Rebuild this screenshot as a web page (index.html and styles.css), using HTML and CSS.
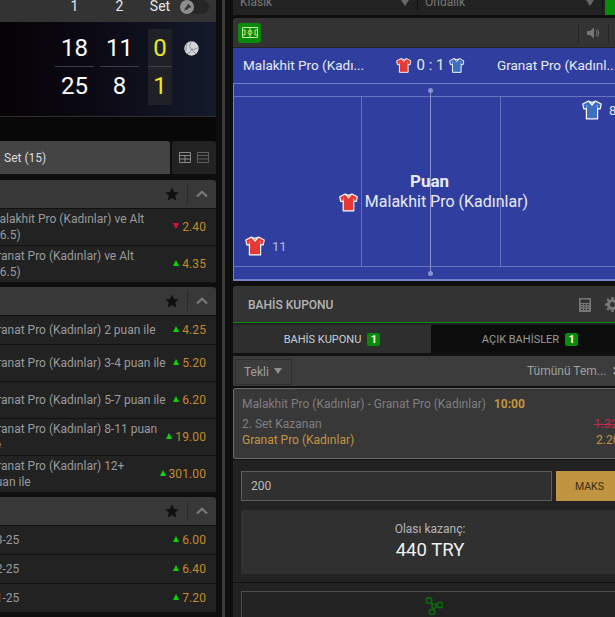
FILE: index.html
```html
<!DOCTYPE html>
<html lang="tr">
<head>
<meta charset="utf-8">
<title>Canlı Bahis</title>
<link rel="stylesheet" href="styles.css">
</head>
<body>
<svg class="defs" width="0" height="0">
  <symbol id="jersey" viewBox="0 0 20 20">
    <path d="M6.5 1 L9 2.2 H11 L13.500 1 L19.200 4 L18.200 9 L15.600 8.600 V18.800 H4.400 V8.600 L1.800 9 L0.800 4 Z" fill="currentColor" stroke="#fff" stroke-width="1.200" stroke-linejoin="round"/>
    <path d="M7 1.500 L10 5 L13 1.500" fill="none" stroke="#fff" stroke-width="1.200"/>
    <path d="M4.400 8.600 L5 5 M15.600 8.600 L15 5" fill="none" stroke="#fff" stroke-width=".6" opacity=".7"/>
  </symbol>
  <symbol id="star" viewBox="0 0 14 14">
    <path d="M7 .5 L9 5 L13.800 5.400 L10.200 8.600 L11.300 13.400 L7 10.900 L2.700 13.400 L3.800 8.600 L.2 5.400 L5 5 Z" fill="#0f0f0f"/>
  </symbol>
  <symbol id="chev" viewBox="0 0 12 8">
    <path d="M1 6.500 L6 1.800 L11 6.500" fill="none" stroke="#7a7a7a" stroke-width="2.200"/>
  </symbol>
</svg>
<div class="page">
  <section class="left">
    <div class="score-head">
      <span class="sh-col">1</span><span class="sh-col">2</span><span class="sh-col sh-set">Set</span>
      <span class="toggle"><span class="knob"><svg width="9" height="9" viewBox="0 0 9 9"><path d="M5 1 L8 4 L6 4.500 L3.500 7 L2 5.500 L4.500 3 Z M3 6 L1 8" fill="#333" stroke="#333" stroke-width=".7"/></svg></span></span>
    </div>
    <div class="score-board">
      <div class="score-col"><span class="num top">18</span><span class="num">25</span></div>
      <div class="score-col"><span class="num top">11</span><span class="num">8</span></div>
      <div class="score-col set"><span class="num top">0</span><span class="num">1</span></div>
      <svg class="ball" width="15" height="15" viewBox="0 0 15 15"><circle cx="7.500" cy="7.500" r="7.200" fill="#d4d5d8"/><path d="M7.500 .5 C5 4 5.500 7 7.500 8 C10 9 13 8 14.500 6 M7.500 8 C7 10.500 5 13 2.500 12.500 M7.500 8 C9 10.500 11 12.500 12.500 12.500 M3 2.500 C2 5 2 8 2 10" fill="none" stroke="#74777e" stroke-width=".7"/></svg>
    </div>
    <div class="strip"></div>
    <div class="tabs">
      <div class="tab-on">Set (15)</div>
      <div class="view-btns">
        <svg width="12" height="11" viewBox="0 0 12 11"><path d="M.5 .5 H11.500 V10.500 H.5 Z M.5 3.500 H11.500 M.5 7 H11.500 M6 3.500 V10.500" fill="none" stroke="#8a8a8a"/></svg>
        <svg width="12" height="11" viewBox="0 0 12 11"><path d="M.5 .5 H11.500 V10.500 H.5 Z M.5 3.500 H11.500 M.5 7 H11.500" fill="none" stroke="#5f5f5f"/></svg>
      </div>
    </div>

    <div class="market">
      <div class="m-head"><svg class="m-star" width="14" height="14"><use href="#star"/></svg><i class="m-sep"></i><svg class="m-chev" width="12" height="8"><use href="#chev"/></svg></div>
      <div class="row tall"><span class="label">Malakhit Pro (Kadınlar) ve Alt (46.5)</span><i class="tri down"></i><span class="odd">2.40</span></div>
      <div class="row tall"><span class="label">Granat Pro (Kadınlar) ve Alt (46.5)</span><i class="tri"></i><span class="odd">4.35</span></div>
    </div>

    <div class="market">
      <div class="m-head"><svg class="m-star" width="14" height="14"><use href="#star"/></svg><i class="m-sep"></i><svg class="m-chev" width="12" height="8"><use href="#chev"/></svg></div>
      <div class="row short"><span class="label">Granat Pro (Kadınlar) 2 puan ile</span><i class="tri"></i><span class="odd">4.25</span></div>
      <div class="row tall"><span class="label">Granat Pro (Kadınlar) 3-4 puan ile</span><i class="tri"></i><span class="odd">5.20</span></div>
      <div class="row tall"><span class="label">Granat Pro (Kadınlar) 5-7 puan ile</span><i class="tri"></i><span class="odd">6.20</span></div>
      <div class="row tall"><span class="label">Granat Pro (Kadınlar) 8-11 puan ile</span><i class="tri"></i><span class="odd">19.00</span></div>
      <div class="row tall"><span class="label narrow">Granat Pro (Kadınlar) 12+ puan ile</span><i class="tri"></i><span class="odd">301.00</span></div>
    </div>

    <div class="market">
      <div class="m-head"><svg class="m-star" width="14" height="14"><use href="#star"/></svg><i class="m-sep"></i><svg class="m-chev" width="12" height="8"><use href="#chev"/></svg></div>
      <div class="row short"><span class="label">23-25</span><i class="tri"></i><span class="odd">6.00</span></div>
      <div class="row short"><span class="label">22-25</span><i class="tri"></i><span class="odd">6.40</span></div>
      <div class="row short"><span class="label">21-25</span><i class="tri"></i><span class="odd">7.20</span></div>
    </div>
  </section>

  <div class="scroll"></div>

  <section class="right">
    <div class="selects">
      <div class="sel">Klasik<i class="caret"></i></div>
      <div class="sel">Ondalık<i class="caret"></i></div>
      <div class="sel-green"></div>
    </div>

    <div class="tool">
      <div class="pitch-btn"><svg width="16" height="11" viewBox="0 0 16 11"><path d="M.5 .5 H15.500 V10.500 H.5 Z M8 .5 V10.500 M.5 3 H3 V8 H.5 M15.500 3 H13 V8 H15.500" fill="none" stroke="#bfeea0"/><circle cx="8" cy="5.500" r="2" fill="none" stroke="#e8e060"/></svg></div>
      <div class="tool-right">
        <i class="tool-sep"></i>
        <svg width="13" height="12" viewBox="0 0 13 12"><path d="M0 4 H3 L7 .5 V11.500 L3 8 H0 Z" fill="#777"/><path d="M9 3.500 Q11 6 9 8.500 M10.500 2 Q13 6 10.500 10" fill="none" stroke="#777"/></svg>
        <i class="tool-sep"></i>
      </div>
    </div>

    <div class="match">
      <div class="teams">
        <span class="team">Malakhit Pro (Kadı...</span>
        <span class="mid">
          <svg class="j red" width="17" height="17"><use href="#jersey"/></svg>
          <span class="sc">0 : 1</span>
          <svg class="j blue" width="17" height="17"><use href="#jersey"/></svg>
        </span>
        <span class="team t2">Granat Pro (Kadınl...</span>
      </div>
      <div class="court">
        <i class="ln h1"></i><i class="ln h2"></i><i class="ln v1"></i><i class="ln v2"></i><i class="ln v3"></i>
        <i class="dot d1"></i><i class="dot d2"></i>
        <div class="p-top"><svg class="j blue" width="20" height="20"><use href="#jersey"/></svg><span>8</span></div>
        <div class="p-bot"><svg class="j red" width="20" height="20"><use href="#jersey"/></svg><span>11</span></div>
        <div class="center">
          <div class="puan">Puan</div>
          <div class="who"><svg class="j red" width="19" height="19"><use href="#jersey"/></svg>Malakhit Pro (Kadınlar)</div>
        </div>
      </div>
    </div>

    <div class="bs-head">
      <span>BAHİS KUPONU</span>
      <span class="bs-icons">
        <svg width="12" height="14" viewBox="0 0 12 14"><path d="M1 0 H11 A1 1 0 0 1 12 1 V13 A1 1 0 0 1 11 14 H1 A1 1 0 0 1 0 13 V1 A1 1 0 0 1 1 0 Z" fill="#777"/><path d="M2 2 H10 V4.500 H2 Z M2 6.500 H4 M5 6.500 H7 M8 6.500 H10 M2 9 H4 M5 9 H7 M8 9 H10 M2 11.500 H4 M5 11.500 H7 M8 11.500 H10" fill="#333" stroke="#333"/></svg>
        <svg width="15" height="15" viewBox="0 0 15 15"><circle cx="7.500" cy="7.500" r="4" fill="none" stroke="#777" stroke-width="3"/><path d="M7.500 0 V3 M7.500 12 V15 M0 7.500 H3 M12 7.500 H15 M2.200 2.200 L4.300 4.300 M10.700 10.700 L12.800 12.800 M12.800 2.200 L10.700 4.300 M4.300 10.700 L2.200 12.800" stroke="#777" stroke-width="2.400"/></svg>
      </span>
    </div>
    <div class="bs-tabs">
      <div class="bs-tab on">BAHİS KUPONU<b class="badge">1</b></div>
      <div class="bs-tab">AÇIK BAHİSLER<b class="badge">1</b></div>
    </div>
    <div class="bs-type">
      <div class="tekli">Tekli<i class="caret light"></i></div>
      <div class="clear">Tümünü Tem...<span class="x">✕</span></div>
    </div>
    <div class="slip">
      <div class="slip-top"><span class="match-name">Malakhit Pro (Kadınlar) - Granat Pro (Kadınlar)</span><b class="time">10:00</b><span class="x2">✕</span></div>
      <div class="slip-line grey"><span>2. Set Kazanan</span><s class="old">1.32</s></div>
      <div class="slip-line gold"><span>Granat Pro (Kadınlar)</span><span class="new">2.20</span></div>
    </div>
    <div class="stake">
      <div class="stake-row">
        <div class="amount">200</div>
        <div class="maks">MAKS</div>
      </div>
      <div class="win">
        <div class="win-l">Olası kazanç:</div>
        <div class="win-v">440 TRY</div>
      </div>
    </div>
    <div class="spin-wrap">
      <div class="spin"><svg width="18" height="18" viewBox="0 0 18 18"><g fill="none" stroke="#0a6e0a" stroke-width="1.500"><circle cx="9" cy="9" r="2.200"/><circle cx="4" cy="3.500" r="2.800"/><circle cx="15" cy="8" r="2.800"/><circle cx="7" cy="15" r="2.800"/><path d="M7.500 7.500 L5.500 5.500 M11 8.700 L12.500 8.300 M8.300 11 L7.800 12.500"/></g></svg></div>
    </div>
  </section>
</div>
</body>
</html>
```
FILE: styles.css
```css
* { box-sizing: border-box; }
html, body { margin: 0; height: 617px; overflow: hidden; background: #0e0e0e; }
body { font-family: Roboto, "Liberation Sans", sans-serif; color: #aaa; font-size: 12px; }
.defs { position: absolute; }
i { display: block; font-style: normal; }

.page { display: flex; width: 615px; height: 617px; overflow: hidden; }
.left { width: 216px; flex: none; }
.scroll { width: 3px; flex: none; margin-left: 6px; background: #3a3a3a; }
.right { width: 400px; flex: none; margin-left: 8px; }

/* score */
.score-head { height: 22px; background: #333; display: flex; align-items: flex-start; padding-left: 52px; color: #e6e6e6; font-size: 14px; line-height: 12px; }
.sh-col { width: 45px; text-align: center; }
.sh-set { width: 36px; }
.toggle { width: 29px; height: 14px; margin-left: 2px; border-radius: 7px; background: #262626; display: block; }
.knob { display: flex; align-items: center; justify-content: center; width: 14px; height: 14px; border-radius: 50%; background: #8e8e8e; }
.score-board { height: 95px; background: linear-gradient(90deg, #060206 0, #0c0a14 45%, #141a2c 100%); display: flex; padding: 7px 0 0 55px; border-bottom: 1px solid #2c2c2c; align-items: flex-start; }
.score-col { width: 39px; margin-right: 6px; display: flex; flex-direction: column; align-items: stretch; }
.num { height: 38px; display: flex; align-items: center; justify-content: center; font-size: 24px; color: #fff; }
.num.top { border-bottom: 1px solid #3c3c44; }
.score-col.set { width: 24px; background: #202126; margin-left: 3px; margin-right: 12px; height: 76px; }
.set .num { color: #e8e820; }
.ball { margin-top: 12px; }
.strip { height: 24px; background: #080808; }
.tabs { display: flex; height: 34px; }
.tab-on { width: 170px; height: 33px; background: #444; color: #ddd; font-size: 12px; padding: 0 0 0 4px; display: flex; align-items: center; border-radius: 0 3px 0 0; }
.view-btns { margin-left: 2px; flex: 1; background: #222; display: flex; align-items: center; gap: 6px; padding-left: 7px; border-radius: 3px 3px 0 0; height: 33px; }

/* markets */
.market { margin-top: 4px; }
.tabs + .market { margin-top: 5px; }
.m-head { height: 29px; background: #383838; border-bottom: 1px solid #111; display: flex; align-items: center; justify-content: flex-end; padding-right: 8px; border-radius: 0 3px 0 0; }
.m-star { margin-right: 8px; }
.m-sep { width: 1px; height: 20px; background: #2a2a2a; margin-right: 8px; }
.row { display: flex; align-items: center; background: #222; border-bottom: 1px solid #111; padding-right: 10px; }
.short { height: 29px; }
.tall { height: 37px; }
.label { flex: 1; margin-left: -11px; color: #9a9a9a; font-size: 12px; line-height: 16px; min-width: 0; padding-right: 7px; }
.label.narrow { padding-right: 14px; }
.tri { width: 0; height: 0; border: 3px solid transparent; border-bottom: 6px solid #0cd20c; border-top: 0; margin-right: 3px; margin-top: -3px; }
.tri.down { border-bottom: 0; border-top: 6px solid #d4103c; }
.odd { color: #c58a2b; font-size: 12px; letter-spacing: .1px; text-align: right; }

/* right top */
.selects { height: 15px; display: flex; background: #222; }
.sel { width: 185px; height: 15px; margin-top: -5px; line-height: 15px; padding-left: 7px; color: #777; font-size: 12px; display: flex; justify-content: space-between; border-right: 1px solid #111; padding-right: 8px; }
.sel-green { width: 14px; height: 15px; background: #0a8a0a; margin-left: 2px; }
.caret { width: 0; height: 0; border: 4px solid transparent; border-top: 6px solid #666; border-bottom: 0; margin-top: 5px; }
.caret.light { border-top-color: #8f8f8f; display: inline-block; margin: 0 0 2px 5px; }
.tool { margin-top: 3px; height: 30px; background: #333; display: flex; align-items: center; justify-content: space-between; padding-left: 5px; border-radius: 3px 3px 0 0; border-bottom: 1px solid #222; }
.pitch-btn { width: 23px; height: 20px; background: #0a8a0a; border-radius: 3px; display: flex; align-items: center; justify-content: center; }
.tool-right { display: flex; align-items: center; gap: 8px; width: 55px; }
.tool-sep { width: 1px; height: 20px; background: #242424; }

/* match */
.match { background: #303f9f; height: 233px; display: flex; flex-direction: column; border-bottom: 2px solid #7582c8; }
.teams { height: 34px; display: flex; align-items: center; color: #e8eaf6; font-size: 13.500px; padding-left: 10px; margin-bottom: 1px; }
.team { width: 153px; }
.team.t2 { width: auto; margin-left: 32px; white-space: nowrap; }
.mid { display: flex; align-items: center; gap: 5px; font-size: 15px; width: 69px; }
.sc { white-space: nowrap; }
.j.red { color: #e53935; }
.j.blue { color: #3f6fc0; }
.court { position: relative; flex: 1; border: 1px solid #7582c8; border-bottom: 0; }
.ln { position: absolute; background: #6672bc; }
.h1 { left: 0; right: 0; top: 12px; height: 1px; }
.h2 { left: 0; right: 0; top: 182px; height: 1px; }
.v1 { left: 127px; top: 12px; height: 170px; width: 1px; }
.v2 { left: 196px; top: 6px; height: 183px; width: 1px; background: #8791d0; }
.v3 { left: 266px; top: 12px; height: 170px; width: 1px; }
.dot { position: absolute; width: 5px; height: 5px; border-radius: 50%; background: #8791d0; left: 194px; }
.d1 { top: 4px; }
.d2 { top: 187px; }
.p-top, .p-bot { position: absolute; display: flex; align-items: center; gap: 7px; color: #b6bde6; font-size: 13px; }
.p-top { top: 16px; left: 348px; color: #dfe2f4; }
.p-bot { top: 152px; left: 11px; }
.center { position: absolute; left: 0; top: 86px; width: 391px; text-align: center; color: #e8eaf6; }
.puan { font-size: 17px; font-weight: 700; line-height: 22px; }
.who { display: flex; align-items: center; justify-content: center; gap: 7px; font-size: 16px; line-height: 20px; padding-left: 8px; }

/* bet slip */
.bs-head { margin-top: 5px; height: 37px; background: #333; border-bottom: 1px solid #0a8a0a; display: flex; align-items: center; justify-content: space-between; padding: 1px 0 0 15px; color: #b5b5b5; font-size: 12px; font-weight: 500; border-radius: 3px 3px 0 0; }
.bs-icons { display: flex; gap: 14px; align-items: center; width: 49px; margin-right: 5px; }
.bs-tabs { display: flex; height: 33px; padding-top: 2px; background: #222; border-bottom: 3px solid #111; }
.bs-tab { width: 198px; display: flex; align-items: center; justify-content: center; gap: 6px; color: #9a9a9a; background: #0c0c0c; font-size: 11px; }
.bs-tab.on { background: #2e2e2e; color: #c5ced6; }
.badge { background: #0a8a0a; color: #fff; font-size: 11px; width: 13px; height: 13px; border-radius: 2px; text-align: center; line-height: 13px; }
.bs-type { height: 30px; background: #3c3c3c; display: flex; align-items: center; justify-content: space-between; color: #a0a0a0; font-size: 12px; padding: 0 0 0 2px; }
.tekli { width: 57px; height: 26px; border: 1px solid #2f2f2f; display: flex; align-items: center; padding-left: 8px; margin-top: 2px; }
.clear { display: flex; gap: 6px; width: 106px; white-space: nowrap; }
.x, .x2 { color: #aaa; font-size: 12px; font-weight: 700; }
.slip { margin-top: 2px; height: 71px; background: #383838; border: 1px solid #6a6a6a; border-radius: 2px; padding: 6px 8px 0 8px; color: #7f7f7f; font-size: 12px; }
.slip-top { display: flex; gap: 8px; align-items: center; height: 17px; }
.match-name { white-space: nowrap; flex: none; }
.time { color: #c1953f; font-weight: 700; flex: none; }
.x2 { margin-left: 83px; flex: none; }
.slip-line { display: flex; height: 16px; position: relative; }
.slip-line.grey { margin-top: 5px; }
.gold { color: #c1953f; }
.old, .new { position: absolute; }
.old { color: #c22a4a; left: 352px; }
.new { left: 354px; }
.stake { background: #222; height: 124px; padding: 11px 8px 0 8px; border-bottom: 1px solid #111; border-top: 1px solid #111; }
.stake-row { display: flex; gap: 4px; height: 30px; }
.amount { width: 311px; background: #303030; border: 1px solid #5c5c5c; color: #bbb; font-size: 12px; padding-left: 9px; line-height: 28px; flex: none; }
.maks { width: 70px; flex: none; background: #c09440; color: #3a2f14; font-size: 10.500px; display: flex; align-items: center; padding-left: 19px; }
.win { margin-top: 9px; height: 64px; background: #303030; text-align: center; width: 400px; padding-top: 11px; padding-right: 22px; }
.win-l { font-size: 12px; color: #b4b4b4; line-height: 16px; }
.win-v { font-size: 18.500px; color: #f0f0f0; line-height: 26px; }
.spin-wrap { background: #222; height: 60px; padding: 8px 8px 0; }
.spin { height: 60px; border: 1px solid #4c4c4c; width: 400px; padding: 5px 0 0 183px; }
```
